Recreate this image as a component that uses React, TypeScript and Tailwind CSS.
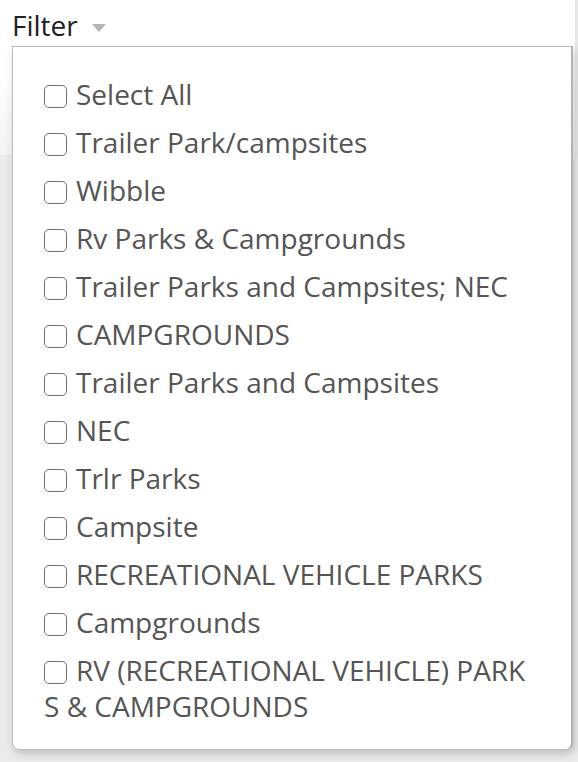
import React, { useState } from 'react';

const OPTIONS = [
  'Trailer Park/campsites',
  'Wibble',
  'Rv Parks & Campgrounds',
  'Trailer Parks and Campsites; NEC',
  'CAMPGROUNDS',
  'Trailer Parks and Campsites',
  'NEC',
  'Trlr Parks',
  'Campsite',
  'RECREATIONAL VEHICLE PARKS',
  'Campgrounds',
  'RV (RECREATIONAL VEHICLE) PARKS & CAMPGROUNDS',
];

const Box: React.FC<{ checked: boolean }> = ({ checked }) => (
  <span className="inline-block w-[23px] h-[23px] mr-[9px] align-[-3px] rounded-[5px] border-[1.5px] border-[#707070] bg-white relative">
    {checked && <span className="absolute inset-[4px] rounded-[1px] bg-[#555]" />}
  </span>
);

export default function App() {
  const [checked, setChecked] = useState<Record<string, boolean>>({});
  const allChecked = OPTIONS.every(o => checked[o]);

  const toggle = (o: string) => setChecked(prev => ({ ...prev, [o]: !prev[o] }));
  const toggleAll = () => {
    const next: Record<string, boolean> = {};
    OPTIONS.forEach(o => (next[o] = !allChecked));
    setChecked(next);
  };

  return (
    <div className="relative w-[578px] h-[762px] overflow-hidden bg-[#ebebeb] font-['Open_Sans',sans-serif]">
      {/* page behind the dropdown */}
      <div className="h-[155px] bg-gradient-to-b from-white via-white to-[#f2f2f2] border-r-[3px] border-[#e6e6e6] pl-[12px] pt-[4px]">
        <button className="h-[42px] pr-[4px] flex items-center gap-[14px] bg-white rounded-t-[8px]">
          <span className="text-[28px] leading-[36px] text-[#1e1e1e]">Filter</span>
          <svg width="14" height="8" viewBox="0 0 14 8" className="mt-[5px]">
            <path d="M0 0 H14 L7 8 Z" fill="#b5b5b5" />
          </svg>
        </button>
      </div>

      {/* dropdown menu */}
      <div className="absolute left-[12px] top-[46px] w-[561px] h-[704px] bg-white border border-[#bdbdbd] border-r-[2px] border-r-[#b3b3b3] rounded-b-[7px] shadow-[2px_4px_8px_rgba(0,0,0,0.18)] pl-[31px] pr-[34px] pt-[29px]">
        <ul className="flex flex-col gap-[12px] text-[28px] leading-[36px] text-[#555]">
          <li className="cursor-pointer select-none" onClick={toggleAll}>
            <Box checked={allChecked} />
            Select All
          </li>
          {OPTIONS.map(o => (
            <li key={o} className="cursor-pointer select-none break-all" onClick={() => toggle(o)}>
              <Box checked={!!checked[o]} />
              {o}
            </li>
          ))}
        </ul>
      </div>
    </div>
  );
}
